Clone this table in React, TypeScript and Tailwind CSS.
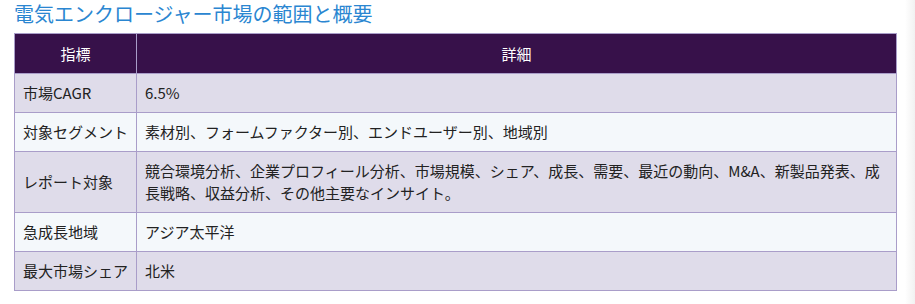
const rows: [string, string][] = [
  ["市場CAGR", "6.5%"],
  ["対象セグメント", "素材別、フォームファクター別、エンドユーザー別、地域別"],
  [
    "レポート対象",
    "競合環境分析、企業プロフィール分析、市場規模、シェア、成長、需要、最近の動向、M&A、新製品発表、成長戦略、収益分析、その他主要なインサイト。",
  ],
  ["急成長地域", "アジア太平洋"],
  ["最大市場シェア", "北米"],
];

export default function App() {
  return (
    <div className="flex h-[304px] w-[915px] bg-white font-['Noto_Sans_CJK_JP','Noto_Sans',sans-serif]">
      <div className="flex-1 pl-[14px] pr-[8px]">
        <h2 className="text-[20px] leading-[28px] text-[#2a86d1]">
          電気エンクロージャー市場の範囲と概要
        </h2>
        <table className="mt-[5px] w-[883px] border-collapse text-[15px] leading-[22px] text-[#222]">
          <thead>
            <tr className="bg-[#37114a] text-white">
              <th className="h-[40px] w-[122px] border border-[#a99dc9] px-[8px] font-normal">
                指標
              </th>
              <th className="h-[40px] border border-[#a99dc9] px-[8px] font-normal">詳細</th>
            </tr>
          </thead>
          <tbody>
            {rows.map(([label, value], i) => (
              <tr key={label} className={i % 2 === 0 ? "bg-[#dfdcea]" : "bg-[#f4f8fb]"}>
                <td className="whitespace-nowrap border border-[#a99dc9] px-[8px] py-[8px] align-middle">
                  {label}
                </td>
                <td className="border border-[#a99dc9] px-[8px] py-[8px] align-middle">{value}</td>
              </tr>
            ))}
          </tbody>
        </table>
      </div>
      <div className="w-[10px] bg-gradient-to-r from-white to-[#f1f1f1]" />
    </div>
  );
}
